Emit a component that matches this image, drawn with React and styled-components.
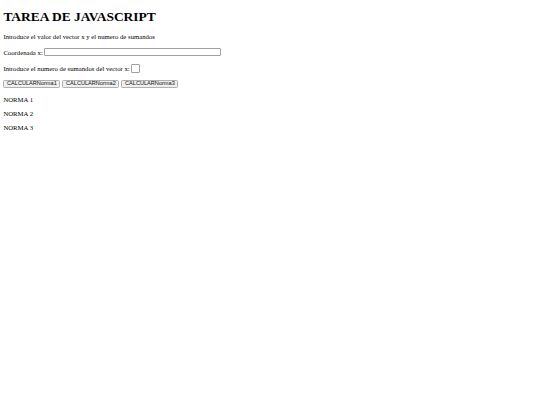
import React from 'react';
import styled, { createGlobalStyle } from 'styled-components';

const Global = createGlobalStyle`
  html, body { background: #fff; }
  body {
    margin: 3.4px;
    font-family: "Liberation Serif", "Times New Roman", serif;
    font-size: 6.72px;
    color: #000;
  }
`;

const Title = styled.h1`
  font-size: 13.44px;
  font-weight: bold;
  margin: 5.8px 0 8.2px;
`;

const Para = styled.p`
  margin: 6.72px 0;
  display: flex;
  align-items: center;
  gap: 1.7px;
  min-height: ${p => (p.$tall ? 9.84 : 0)}px;
`;

const TextInput = styled.input`
  box-sizing: border-box;
  width: ${p => p.$w}px;
  height: 8.6px;
  padding: 0;
  margin: 0;
  border: 1px solid #a0a0a0;
  border-radius: 1px;
  background: #fff;
`;

const Buttons = styled.div`
  margin: 5.3px 0 5.9px;
  height: 9.2px;
  display: flex;
  align-items: flex-start;
  gap: 2px;
`;

const Button = styled.button`
  box-sizing: border-box;
  font-family: "Liberation Sans", Arial, sans-serif;
  font-size: 5.6px;
  width: 57px;
  height: 8px;
  padding: 0;
  margin: 0;
  line-height: 1;
  background: #efefef;
  border: 1px solid #b0b0b0;
  border-radius: 1.3px;
  color: #111;
`;

export default function App() {
  return (
    <>
      <Global />
      <Title>TAREA DE JAVASCRIPT</Title>
      <Para>Introduce el valor del vector x y el numero de sumandos</Para>
      <Para $tall>Coordenada x: <TextInput $w={177} /></Para>
      <Para $tall>Introduce el numero de sumandos del vector x: <TextInput $w={8.5} /></Para>
      <Buttons>
        <Button>CALCULARNorma1</Button>
        <Button>CALCULARNorma2</Button>
        <Button>CALCULARNorma3</Button>
      </Buttons>
      <Para>NORMA 1</Para>
      <Para>NORMA 2</Para>
      <Para>NORMA 3</Para>
    </>
  );
}
